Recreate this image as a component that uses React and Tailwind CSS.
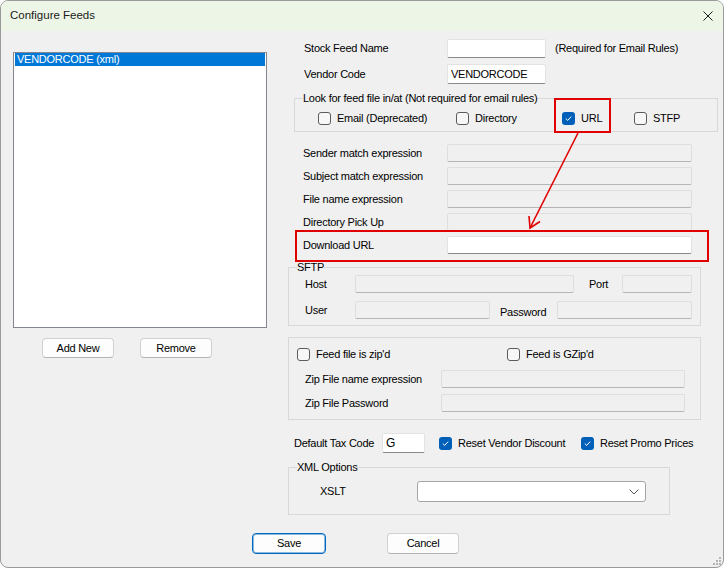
const CheckBox = ({ checked }) =>
    checked ? (
        <span className="w-[13px] h-[13px] rounded-[3px] bg-[#005fb8] flex items-center justify-center shrink-0">
            <svg width="9" height="9" viewBox="0 0 9 9">
                <path d="M1.8 4.6 L3.7 6.4 L7.2 2.6" fill="none" stroke="#ffffff" strokeWidth="1" />
            </svg>
        </span>
    ) : (
        <span className="w-[13px] h-[13px] rounded-[3px] border border-[#5c5c5c] bg-[#f7f7f7] shrink-0" />
    );

const CheckItem = ({ label, checked, className }) => (
    <div className={`flex items-center ${className || ""}`}>
        <CheckBox checked={checked} />
        <span className="ml-[6px]">{label}</span>
    </div>
);

const TextBox = ({ className, value, disabled }) => (
    <div
        className={`${className} border rounded-[2px] flex items-center pl-[3px] ${
            disabled
                ? "bg-[#f0f0f0] border-[#dedede] border-b-[#b5b5b5]"
                : "bg-white border-[#e3e3e3] border-b-[#8a8a8a]"
        }`}
    >
        {value}
    </div>
);

const Button = ({ label, className, primary }) => (
    <div
        className={`${className} bg-[#fdfdfd] rounded-[4px] flex items-center justify-center ${
            primary
                ? "border border-[#0067c0] shadow-[inset_0_0_0_1px_rgba(0,103,192,0.45)]"
                : "border border-[#d1d1d1] border-b-[#b3b3b3]"
        }`}
    >
        {label}
    </div>
);

const ExprRow = ({ label, disabled = true, className }) => (
    <div className={`flex items-center h-[18px] ${className || ""}`}>
        <span className="pl-[16px] w-[160px] shrink-0">{label}</span>
        <TextBox className="w-[245px] h-[18px]" disabled={disabled} />
    </div>
);

export default function App() {
    return (
        <div className="w-[725px] h-[569px] bg-white font-['Liberation_Sans',Arial,sans-serif] text-[11px] tracking-[-0.25px] text-black">
            <div className="relative w-[724px] h-[568px] border border-[#9a9a9a] rounded-[8px] overflow-hidden bg-[#f0f0f0] flex flex-col">
                {/* title bar */}
                <div className="h-[30px] shrink-0 bg-[#edf6e6] flex items-center justify-between pl-[9px] pr-[10px]">
                    <span className="text-[11.5px] tracking-normal text-[#1b1b1b]">Configure Feeds</span>
                    <svg width="10" height="10" viewBox="0 0 10 10">
                        <path d="M0.5 0.5 L9.5 9.5 M9.5 0.5 L0.5 9.5" stroke="#1b1b1b" strokeWidth="1" />
                    </svg>
                </div>

                <div className="flex-1 flex flex-col">
                    <div className="flex">
                        {/* left column */}
                        <div className="ml-[12px] mt-[21px] w-[254px] shrink-0">
                            <div className="h-[276px] border border-[#828790] bg-white px-[1px]">
                                <div className="h-[13px] leading-[13px] bg-[#0078d7] text-white pl-[2px]">
                                    VENDORCODE (xml)
                                </div>
                            </div>
                            <div className="mt-[10px] flex">
                                <Button label="Add New" className="ml-[29px] w-[72px] h-[20px]" />
                                <Button label="Remove" className="ml-[26px] w-[72px] h-[20px]" />
                            </div>
                        </div>

                        {/* right column */}
                        <div className="ml-[20px] w-[435px] pt-[8px]">
                            <div className="flex items-center h-[19px]">
                                <span className="pl-[17px] w-[160px] shrink-0">Stock Feed Name</span>
                                <TextBox className="w-[99px] h-[19px]" />
                                <span className="ml-[9px]">(Required for Email Rules)</span>
                            </div>
                            <div className="mt-[6px] flex items-center h-[20px]">
                                <span className="pl-[17px] w-[160px] shrink-0">Vendor Code</span>
                                <TextBox className="w-[99px] h-[20px]" value="VENDORCODE" />
                            </div>

                            <fieldset className="mt-[7px] ml-[7px] w-[424px] border border-[#d8d8d8]">
                                <legend className="ml-[8px] h-[14px] leading-[14px]">
                                    Look for feed file in/at (Not required for email rules)
                                </legend>
                                <div className="h-[26px] flex items-center pl-[23px]">
                                    <CheckItem label="Email (Deprecated)" className="w-[138px]" />
                                    <CheckItem label="Directory" className="w-[106px]" />
                                    <CheckItem label="URL" checked className="w-[72px]" />
                                    <CheckItem label="STFP" />
                                </div>
                            </fieldset>

                            <ExprRow label="Sender match expression" className="mt-[12px]" />
                            <ExprRow label="Subject match expression" className="mt-[5px]" />
                            <ExprRow label="File name expression" className="mt-[5px]" />
                            <ExprRow label="Directory Pick Up" className="mt-[5px]" />
                            <ExprRow label="Download URL" disabled={false} className="mt-[5px]" />

                            <fieldset className="mt-[6px] ml-[1px] w-[413px] border border-[#d8d8d8] pt-[1px] pb-[6px]">
                                <legend className="ml-[8px] h-[14px] leading-[14px]">SFTP</legend>
                                <div className="flex items-center h-[18px]">
                                    <span className="pl-[16px] w-[66px] shrink-0">Host</span>
                                    <TextBox className="w-[219px] h-[18px]" disabled />
                                    <span className="ml-[15px] w-[33px] shrink-0">Port</span>
                                    <TextBox className="w-[70px] h-[18px]" disabled />
                                </div>
                                <div className="mt-[8px] flex items-center h-[18px]">
                                    <span className="pl-[16px] w-[66px] shrink-0">User</span>
                                    <TextBox className="w-[135px] h-[18px]" disabled />
                                    <span className="ml-[10px] w-[57px] shrink-0 mt-[4px]">Password</span>
                                    <TextBox className="w-[135px] h-[18px]" disabled />
                                </div>
                            </fieldset>

                            <div className="mt-[11px] ml-[1px] w-[413px] border border-[#d8d8d8] pt-[10px] pb-[7px]">
                                <div className="flex items-center h-[13px] pl-[8px]">
                                    <CheckItem label="Feed file is zip'd" className="w-[210px]" />
                                    <CheckItem label="Feed is GZip'd" />
                                </div>
                                <div className="mt-[9px] flex items-center h-[18px]">
                                    <span className="pl-[16px] w-[152px] shrink-0">Zip File name expression</span>
                                    <TextBox className="w-[244px] h-[18px]" disabled />
                                </div>
                                <div className="mt-[6px] flex items-center h-[18px]">
                                    <span className="pl-[16px] w-[152px] shrink-0">Zip File Password</span>
                                    <TextBox className="w-[244px] h-[18px]" disabled />
                                </div>
                            </div>

                            <div className="mt-[13px] flex items-center h-[20px]">
                                <span className="pl-[7px] w-[95px] shrink-0">Default Tax Code</span>
                                <TextBox className="w-[43px] h-[20px] text-[12px]" value="G" />
                                <CheckItem label="Reset Vendor Discount" checked className="ml-[14px] w-[142px]" />
                                <CheckItem label="Reset Promo Prices" checked />
                            </div>

                            <fieldset className="mt-[7px] ml-[1px] w-[382px] border border-[#d8d8d8] pt-[7px] pb-[12px]">
                                <legend className="ml-[8px] h-[14px] leading-[14px]">XML Options</legend>
                                <div className="flex items-center h-[21px]">
                                    <span className="pl-[31px] w-[128px] shrink-0">XSLT</span>
                                    <div className="w-[229px] h-[21px] bg-white border border-[#a5a5a5] rounded-[3px] flex items-center justify-end pr-[6px]">
                                        <svg width="10" height="6" viewBox="0 0 10 6">
                                            <path d="M0.5 0.5 L5 5 L9.5 0.5" fill="none" stroke="#555555" strokeWidth="1" />
                                        </svg>
                                    </div>
                                </div>
                            </fieldset>
                        </div>
                    </div>

                    <div className="mt-[18px] flex">
                        <Button label="Save" primary className="ml-[251px] w-[74px] h-[21px]" />
                        <Button label="Cancel" className="ml-[61px] w-[72px] h-[21px]" />
                    </div>
                </div>

                {/* annotations */}
                <div className="absolute left-[553px] top-[97px] w-[57px] h-[35px] border-2 border-[#e00000]" />
                <div className="absolute left-[294px] top-[229px] w-[414px] h-[32px] border-2 border-[#e00000]" />
                <svg className="absolute left-0 top-0 pointer-events-none" width="722" height="566">
                    <path d="M577 132 L529 227" stroke="#e00000" strokeWidth="1.6" fill="none" />
                    <path d="M528 215 L529 227 L539 220.5" stroke="#e00000" strokeWidth="1.6" fill="none" />
                </svg>

                {/* resize grip */}
                <svg className="absolute right-[2px] bottom-[2px]" width="8" height="8" viewBox="0 0 8 8">
                    <rect x="6" y="0" width="2" height="2" fill="#b5b5b5" />
                    <rect x="3" y="3" width="2" height="2" fill="#b5b5b5" />
                    <rect x="6" y="3" width="2" height="2" fill="#b5b5b5" />
                    <rect x="0" y="6" width="2" height="2" fill="#b5b5b5" />
                    <rect x="3" y="6" width="2" height="2" fill="#b5b5b5" />
                    <rect x="6" y="6" width="2" height="2" fill="#b5b5b5" />
                </svg>
            </div>
        </div>
    );
}
